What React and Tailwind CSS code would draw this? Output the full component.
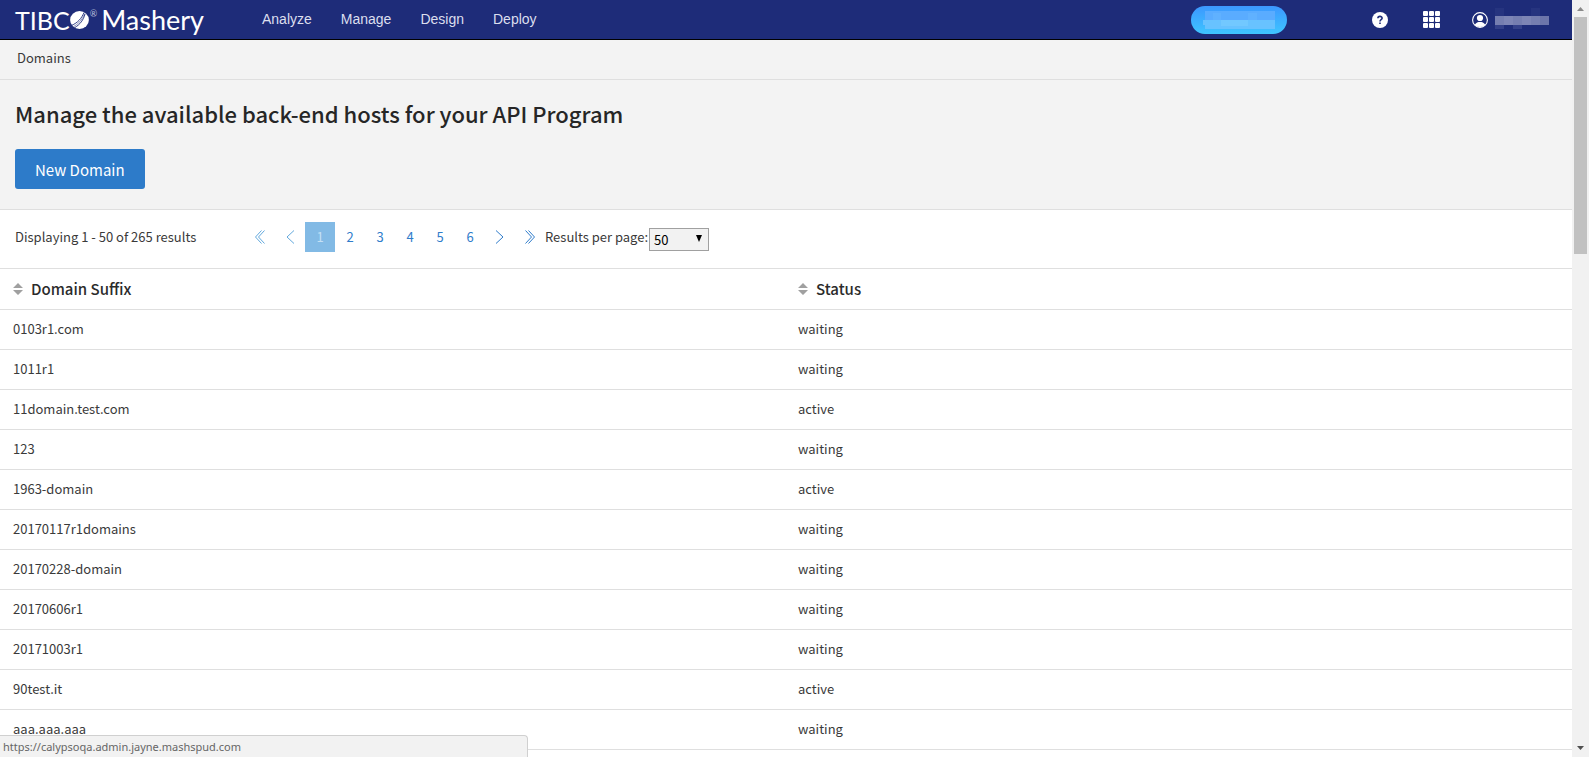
const domains = [
  ['0103r1.com', 'waiting'],
  ['1011r1', 'waiting'],
  ['11domain.test.com', 'active'],
  ['123', 'waiting'],
  ['1963-domain', 'active'],
  ['20170117r1domains', 'waiting'],
  ['20170228-domain', 'waiting'],
  ['20170606r1', 'waiting'],
  ['20171003r1', 'waiting'],
  ['90test.it', 'active'],
  ['aaa.aaa.aaa', 'waiting'],
  ['', ''],
];

function Logo() {
  return (
    <a href="#home" aria-label="TIBCO Mashery" className="flex h-full w-[190px] items-center font-['Lato',sans-serif] text-[25px] leading-8 text-white">
      <span>TIBC</span>
      <svg width="20" height="20" viewBox="0 0 20 20" className="shrink-0">
        <ellipse cx="9.500" cy="10" rx="9.400" ry="8.900" fill="#fff" />
        <path d="M1.500 15.500C8 12.500 11.500 8.500 14 2.500M4.500 17.800C10 14.500 13.500 10 15 4" fill="none" stroke="#1e2c79" strokeWidth="0.9" />
        <path d="M3 17C8.500 14 12.500 9.500 14.700 3.500" fill="none" stroke="#1e2c79" strokeWidth="0.5" />
      </svg>
      <span className="self-start pt-2 text-[9px] leading-3 text-[#b9bfdc]">®</span>
      <span className="pl-1 text-[27px]">Mashery</span>
    </a>
  );
}

function Chevrons({ double, left }) {
  return (
    <svg width="12" height="16" viewBox="0 0 12 16" fill="none" stroke="currentColor" className={left ? 'rotate-180' : ''}>
      {double ? <path d="M1.500 1.500L7.500 8L1.500 14.500M4.500 1.500L10.500 8L4.500 14.500" /> : <path d="M2 1.500L9 8L2 14.500" />}
    </svg>
  );
}

function SortIcon() {
  return (
    <svg width="10" height="12" viewBox="0 0 10 12" fill="#a0a0a0" className="shrink-0">
      <path d="M5 0L10 5H0ZM5 12L10 7H0Z" />
    </svg>
  );
}

function Header() {
  return (
    <header className="flex h-10 items-center border-b border-black bg-[#1e2c79] pl-[15px] pr-[23px]">
      <Logo />
      <nav className="ml-[57px] flex gap-[29px] pb-px font-['Liberation_Sans',sans-serif] text-sm text-[#dcdfee]">
        <a href="#analyze">Analyze</a>
        <a href="#manage">Manage</a>
        <a href="#design">Design</a>
        <a href="#deploy">Deploy</a>
      </nav>
      <div className="ml-auto flex items-center">
        <button aria-label="Program" className="mr-[85px] flex h-7 w-24 items-center justify-center rounded-full bg-linear-to-b from-[#3c97ff] to-[#3fc5ff]">
          <svg width="72" height="18" viewBox="0 0 72 18">
            <path d="M2 0H72V9H2Z" fill="#5aacff" />
            <path d="M0 9H72V18H2V14H0Z" fill="#68c2ff" />
            <path d="M10 2H18V9H10ZM45 2H54V9H45Z" fill="#60b1ff" />
            <path d="M18 9H45V15H18Z" fill="#72c8ff" />
          </svg>
        </button>
        <button aria-label="Help" className="mr-[35px]">
          <svg width="16" height="16" viewBox="0 0 16 16">
            <circle cx="8" cy="8" r="8" fill="#fff" />
            <path d="M5.900 6.300C5.900 3.800 10.100 3.800 10.100 6.200C10.100 7.700 8 7.600 8 9.400" fill="none" stroke="#1e2c79" strokeWidth="1.600" />
            <path d="M7.200 10.400H8.800V12H7.200Z" fill="#1e2c79" />
          </svg>
        </button>
        <button aria-label="Apps" className="mr-[31px]">
          <svg width="18" height="18" viewBox="0 0 18 18" fill="#fff">
            {[0, 6, 12].map((y) => [0, 6, 12].map((x) => <rect key={x + '-' + y} x={x} y={y} width="5" height="5" rx="1" />))}
          </svg>
        </button>
        <button aria-label="Account" className="flex items-center gap-[7px]">
          <svg width="16" height="16" viewBox="0 0 16 16">
            <circle cx="8" cy="8" r="7.400" fill="none" stroke="#fff" strokeWidth="1.100" />
            <circle cx="8" cy="6" r="3.100" fill="#fff" />
            <path d="M2.700 12.800C4 10.300 6 9.900 8 9.900S12 10.300 13.300 12.800C10.500 15.800 5.500 15.800 2.700 12.800Z" fill="#fff" />
          </svg>
          <svg width="54" height="24" viewBox="0 0 54 24">
            <path d="M0 0H9V8H0ZM36 0H45V8H36Z" fill="#26347f" />
            <path d="M0 8H54V17H0Z" fill="#757eb0" />
            <path d="M9 8H18V17H9ZM27 8H36V17H27Z" fill="#7d85b5" />
            <path d="M45 8H54V17H45Z" fill="#6c75aa" />
            <path d="M0 17H9V21H0ZM18 17H27V21H18Z" fill="#34418a" />
          </svg>
        </button>
      </div>
    </header>
  );
}

function Pagination() {
  const cell = 'flex size-[30px] items-center justify-center';
  return (
    <div className="flex h-[59px] items-center border-b border-[#dfdfdf] px-[15px] pb-[5px]">
      <p className="w-[230px]">Displaying 1 - 50 of 265 results</p>
      <nav aria-label="Pages" className="flex items-center text-[#2f7ccb]">
        <a href="#first" aria-label="First page" className={`${cell} text-[#63a9dd]`}><Chevrons double left /></a>
        <a href="#previous" aria-label="Previous page" className={`${cell} text-[#63a9dd]`}><Chevrons left /></a>
        <a href="#1" aria-current="page" className={`${cell} bg-[#82bae5] text-[#c4e0f5]`}>1</a>
        {[2, 3, 4, 5, 6].map((n) => (
          <a key={n} href={`#${n}`} className={cell}>{n}</a>
        ))}
        <a href="#next" aria-label="Next page" className={cell}><Chevrons /></a>
        <a href="#last" aria-label="Last page" className={cell}><Chevrons double /></a>
      </nav>
      <label htmlFor="per-page">Results per page:</label>
      <div className="relative ml-px mt-[5px]">
        <select id="per-page" defaultValue="50" className="block h-[23px] w-[60px] appearance-none border border-[#a0a0a0] bg-[#f2f2f2] pl-1 pt-px text-black">
          <option>50</option>
          <option>100</option>
        </select>
        <svg width="6" height="7" viewBox="0 0 6 7" className="pointer-events-none absolute right-[7px] top-[7px]">
          <path d="M0 0H6L3 7Z" />
        </svg>
      </div>
    </div>
  );
}

function DomainTable() {
  return (
    <table className="w-full table-fixed border-collapse text-left">
      <thead>
        <tr className="h-10 border-b border-[#dfdfdf]">
          {['Domain Suffix', 'Status'].map((title) => (
            <th key={title} className="py-0 pl-[13px] text-[15px] font-medium text-[#2b2b2b] last:pl-3">
              <button className="flex items-center gap-2 pt-px"><SortIcon />{title}</button>
            </th>
          ))}
        </tr>
      </thead>
      <tbody>
        {domains.map(([name, status], i) => (
          <tr key={i} className="h-10 border-b border-[#dfdfdf]">
            <td className="py-0 pl-[13px]">{name}</td>
            <td className="py-0 pl-3">{status}</td>
          </tr>
        ))}
      </tbody>
    </table>
  );
}

function ScrollBar() {
  return (
    <div aria-hidden="true" className="flex w-[17px] shrink-0 flex-col items-center bg-[#f1f1f1]">
      <svg width="17" height="17" viewBox="0 0 17 17"><path d="M5 11H12L8.500 7Z" fill="#8a8a8a" /></svg>
      <div className="h-[237px] w-[13px] bg-[#c1c1c1]" />
      <svg width="17" height="17" viewBox="0 0 17 17" className="mt-auto"><path d="M5 6H12L8.500 10Z" fill="#505050" /></svg>
    </div>
  );
}

export default function App() {
  return (
    <div className="flex h-screen overflow-hidden bg-white font-['Noto_Sans_CJK_SC',sans-serif] text-[13px] leading-5 text-[#3a3a3a]">
      <div className="min-w-0 flex-1 overflow-hidden">
        <Header />
        <div className="flex h-10 items-center border-b border-[#dfdfdf] bg-[#f3f3f3] px-[17px] pb-1">Domains</div>
        <section className="border-b border-[#dfdfdf] bg-[#f3f3f3] px-[15px] pb-5 pt-[18px]">
          <h1 className="text-[22px] font-medium leading-[30px] text-[#262626]">Manage the available back-end hosts for your API Program</h1>
          <button className="mt-[21px] h-10 rounded-[3px] bg-[#2d7bc9] px-5 pt-[2px] text-[15px] text-white">New Domain</button>
        </section>
        <Pagination />
        <DomainTable />
      </div>
      <ScrollBar />
      <div className="fixed bottom-0 left-0 h-[22px] w-[33.2%] rounded-tr border-r border-t border-[#d0d0d0] bg-[#f2f2f2] px-[3px] font-['Noto_Sans',sans-serif] text-[11px] leading-[22px] text-[#666]">
        https://calypsoqa.admin.jayne.mashspud.com
      </div>
    </div>
  );
}
